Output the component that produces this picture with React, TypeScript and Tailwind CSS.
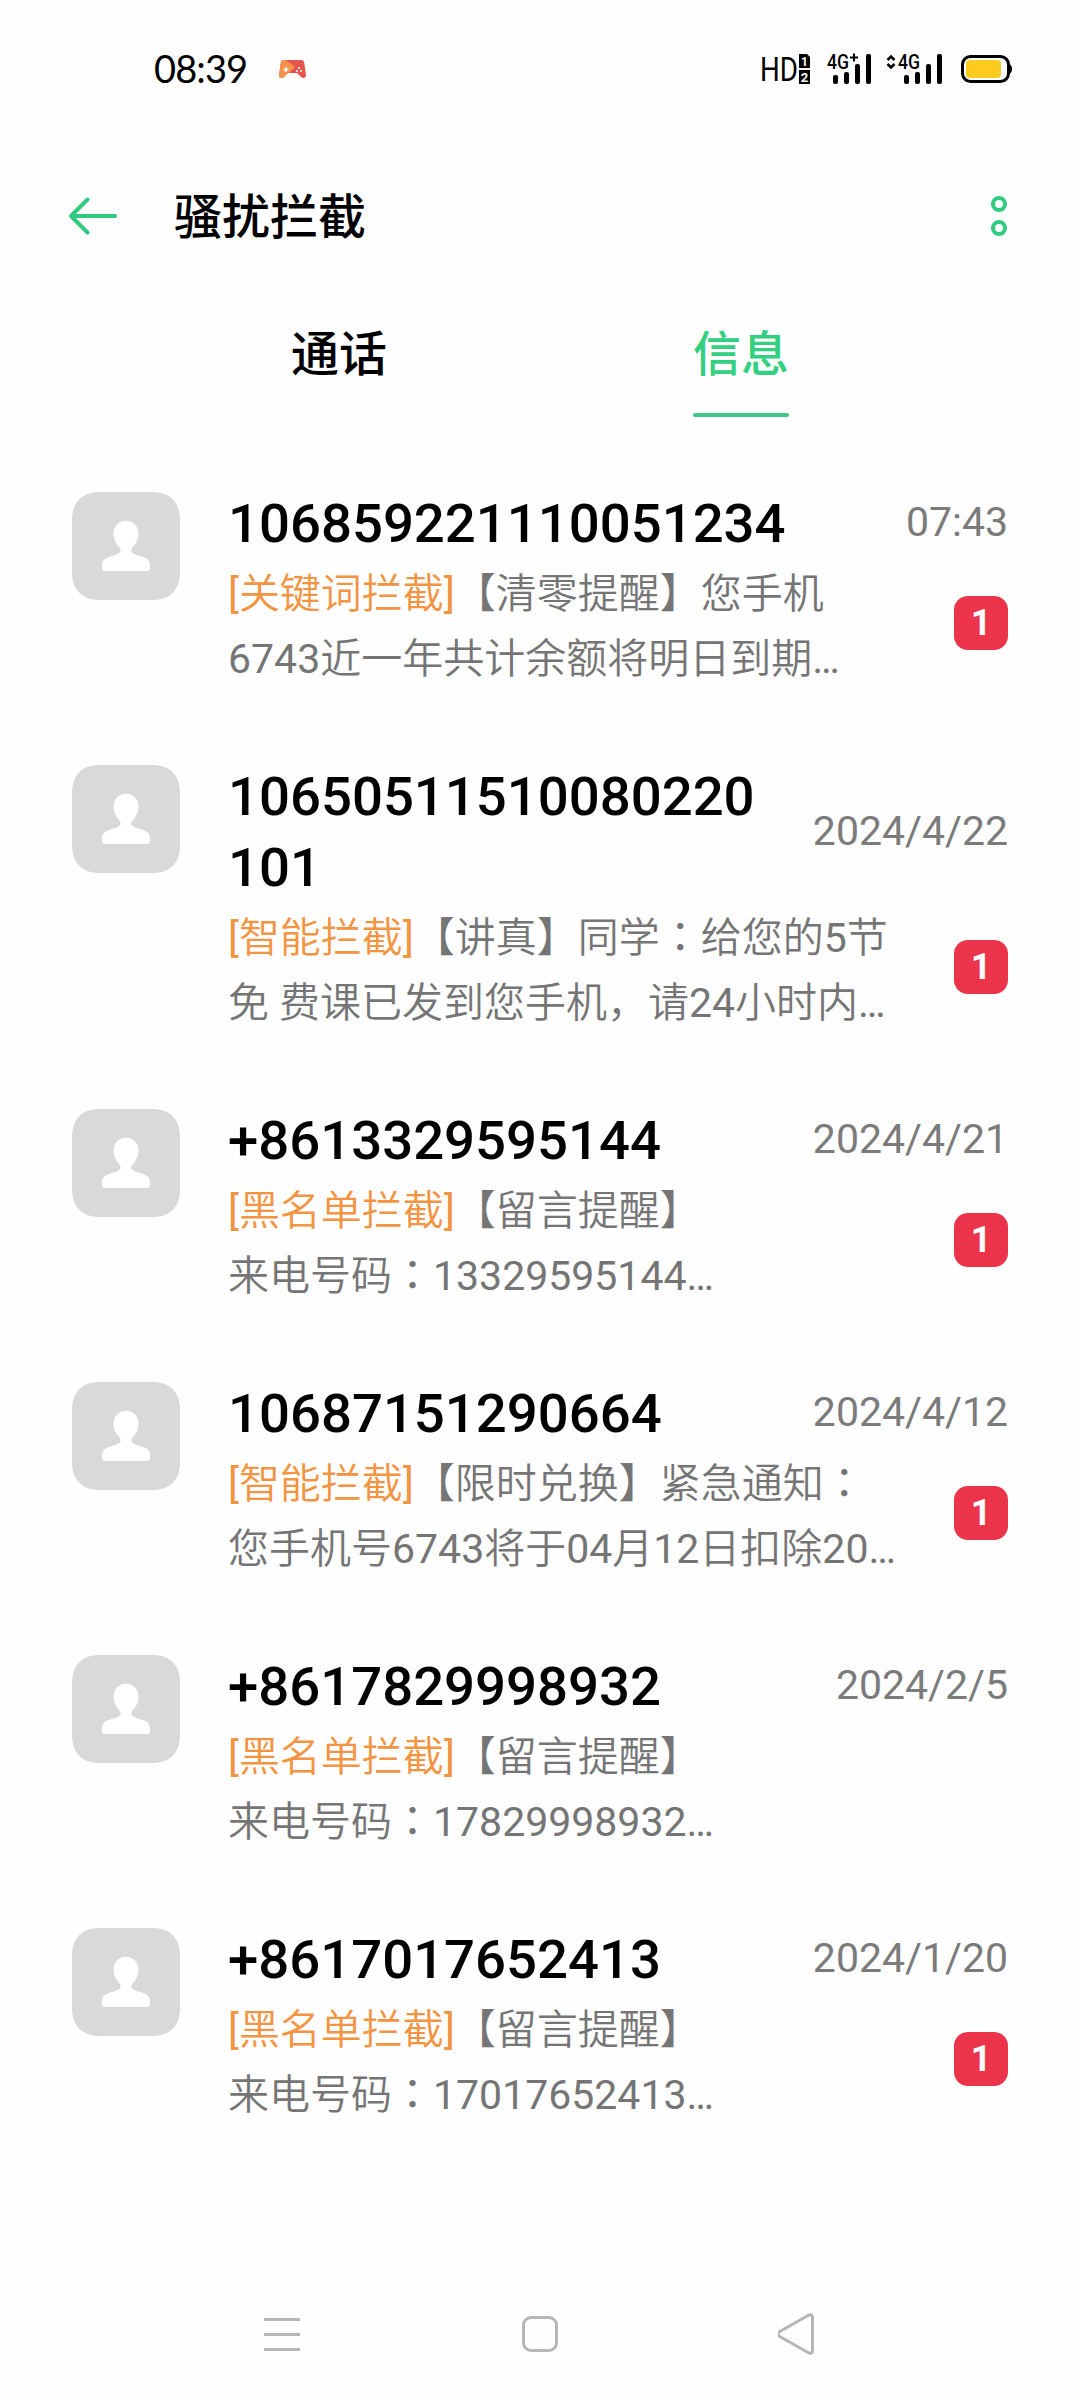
import type { ReactNode } from 'react';

// ─── Data ────────────────────────────────────────────────────────────────────

interface Message {
  number: string[];
  time:   string;
  tag:    string;
  lines:  [string, string];
  unread?: number;
}

const MESSAGES: Message[] = [
  { number: ['106859221110051234'],      time: '07:43',     tag: '关键词拦截', lines: ['【清零提醒】您手机', '6743近一年共计余额将明日到期…'],          unread: 1 },
  { number: ['10650511510080220', '101'], time: '2024/4/22', tag: '智能拦截',   lines: ['【讲真】同学：给您的5节', '免 费课已发到您手机，请24小时内…'],      unread: 1 },
  { number: ['+8613329595144'],          time: '2024/4/21', tag: '黑名单拦截', lines: ['【留言提醒】', '来电号码：13329595144…'],                     unread: 1 },
  { number: ['10687151290664'],          time: '2024/4/12', tag: '智能拦截',   lines: ['【限时兑换】紧急通知：', '您手机号6743将于04月12日扣除20…'],      unread: 1 },
  { number: ['+8617829998932'],          time: '2024/2/5',  tag: '黑名单拦截', lines: ['【留言提醒】', '来电号码：17829998932…'] },
  { number: ['+8617017652413'],          time: '2024/1/20', tag: '黑名单拦截', lines: ['【留言提醒】', '来电号码：17017652413…'],                     unread: 1 },
];

// ─── Status bar ──────────────────────────────────────────────────────────────

function Bars() {
  return (
    <g>
      <rect x="6"  y="22" width="5" height="9"  rx="2" />
      <rect x="17" y="19" width="5" height="12" rx="2" />
      <rect x="28" y="11" width="5" height="20" rx="2" />
      <rect x="39" y="1"  width="5" height="30" rx="2" />
    </g>
  );
}

function StatusBar() {
  return (
    <header className="flex h-[138px] items-start justify-between pl-[154px] pr-[68px] pt-[53px]">
      <div className="flex items-start">
        <span className="-mt-px w-[94px] font-['Lato'] text-[38px] leading-[32px] tracking-[-0.9px] text-black">08:39</span>
        <svg className="ml-[31px] mt-[7px]" width="27" height="19" viewBox="0 0 27 19">
          <path d="M5 0h17c2 0 3 1 3.300 3l1.700 12c.2 3-3 4-5 2l-4-4h-9l-4 4c-2 2-5 1-4.900-2L1.700 3C2 1 3 0 5 0z" fill="#e2564d" />
          <path d="M5 0h2l9 7-6 6H9l-4 4c-2 2-5 1-4.900-2L1.700 3C2 1 3 0 5 0z" fill="#f5924a" />
          <path d="M7 7v5M4.500 9.500h5" stroke="#fff" strokeWidth="1.500" />
          <circle cx="20" cy="8" r="1" fill="#fff" />
          <circle cx="18" cy="11" r="1" fill="#fff" />
          <circle cx="22" cy="11" r="1" fill="#fff" />
        </svg>
      </div>
      <div className="flex items-start">
        <svg className="overflow-visible" width="50" height="32" viewBox="0 0 50 32">
          <text x="-1" y="28" fontFamily="Roboto, sans-serif" fontSize="33" textLength="38" lengthAdjust="spacingAndGlyphs">HD</text>
          <path d="M38 1h8l3 3v11H38z" />
          <path d="M38 17h11v14H38z" />
          <text x="43.500" y="12.500" textAnchor="middle" fill="#fff" fontFamily="Roboto, sans-serif" fontWeight="700" fontSize="12">1</text>
          <text x="43.500" y="28.500" textAnchor="middle" fill="#fff" fontFamily="Roboto, sans-serif" fontWeight="700" fontSize="13">2</text>
        </svg>
        <svg className="ml-[16px] overflow-visible" width="45" height="32" viewBox="0 0 45 32">
          <text x="0" y="15.500" fontFamily="Roboto, sans-serif" fontWeight="500" fontSize="20" textLength="22" lengthAdjust="spacingAndGlyphs">4G</text>
          <path d="M23 4.500h8M27 .5v8" stroke="#000" strokeWidth="2" />
          <Bars />
        </svg>
        <svg className="ml-[14px] overflow-visible" width="58" height="32" viewBox="0 0 58 32">
          <path d="M1.500 7L5 3.500 8.500 7M1.500 11L5 14.500 8.500 11" fill="none" stroke="#000" strokeWidth="2.500" />
          <text x="12" y="15.500" fontFamily="Roboto, sans-serif" fontWeight="500" fontSize="20" textLength="22" lengthAdjust="spacingAndGlyphs">4G</text>
          <g transform="translate(12 0)"><Bars /></g>
        </svg>
        <svg className="ml-[17px]" width="51" height="32" viewBox="0 0 51 32">
          <rect x="1.500" y="3.500" width="46" height="25" rx="8" fill="none" stroke="#000" strokeWidth="3" />
          <rect x="5" y="7" width="35" height="18" rx="4" fill="#fccb20" />
          <path d="M48 11c2 1 3 2 3 5s-1 4-3 5z" />
        </svg>
      </div>
    </header>
  );
}

// ─── Title and tabs ──────────────────────────────────────────────────────────

function TitleBar() {
  return (
    <div className="flex h-[156px] items-center pl-[68px] pr-[71px]">
      <svg width="50" height="40" viewBox="0 0 50 40" fill="none" stroke="#32ca80" strokeWidth="4" strokeLinecap="round" strokeLinejoin="round">
        <path d="M47 20H3M19.500 3.500L3 20l16.500 16.500" />
      </svg>
      <h1 className="ml-[56px] flex-1 pt-1 text-[48px] font-medium leading-[60px]">骚扰拦截</h1>
      <svg width="20" height="44" viewBox="0 0 20 44" fill="none" stroke="#32ca80" strokeWidth="4">
        <circle cx="10" cy="10" r="6" />
        <circle cx="10" cy="34" r="6" />
      </svg>
    </div>
  );
}

function Tab({ active, children }: { active?: boolean; children: ReactNode }) {
  return (
    <div className="flex w-[402px] flex-col items-center">
      <span className={active ? 'text-[48px] font-medium leading-[60px] text-[#32d080]' : 'text-[48px] font-medium leading-[60px]'}>
        {children}
      </span>
      {active && <span className="mt-[28px] h-1 w-24 rounded-sm bg-[#40c686]" />}
    </div>
  );
}

// ─── Message list ────────────────────────────────────────────────────────────

function Avatar() {
  return (
    <svg className="mt-1 shrink-0" width="108" height="108" viewBox="0 0 108 108">
      <path d="M28 0h52C98 0 108 10 108 28v52c0 18-10 28-28 28H28C10 108 0 98 0 80V28C0 10 10 0 28 0z" fill="#d9d9d9" />
      <path
        d="M54 28.700c7.500 0 12.500 5.500 12.500 13 0 5-2 9.500-5 12.500-2.500 2.700-3 5.300-.5 7 2.500 1.600 8 2.800 12.500 4.800 3 1.400 4.500 3.500 4.500 7v3c0 2-1 3-3 3H33c-2 0-3-1-3-3v-3c0-3.500 1.500-5.600 4.500-7 4.500-2 10-3.200 12.500-4.800 2.500-1.700 2-4.300-.5-7-3-3-5-7.500-5-12.500 0-7.500 5-13 12.500-13z"
        fill="#fff"
      />
    </svg>
  );
}

// Digits keep the regular weight, Chinese is a step lighter, and the
// full-width colon sits in the middle of its cell.
function Preview({ text }: { text: string }) {
  return (
    <>
      {text.split(/([0-9…]+|：)/).map((part, i) => {
        if (part === '：') {
          return <span key={i} lang="zh-TW" className="font-['Noto_Sans_CJK_TC'] leading-none">{part}</span>;
        }
        return <span key={i} className={/^[0-9…]/.test(part) ? 'font-normal' : 'font-[350]'}>{part}</span>;
      })}
    </>
  );
}

function MessageRow({ message }: { message: Message }) {
  return (
    <li className="flex pb-[72px] pl-[72px] pr-[72px]">
      <Avatar />
      <div className="ml-12 flex-1">
        <div className="flex items-center justify-between">
          <h2 className="text-[54.500px] font-medium leading-[71px]">
            {message.number.map((part) => <div key={part}>{part}</div>)}
          </h2>
          <time className="-mt-0.5 text-[41px] leading-[69px] text-[#7b7b7b]">{message.time}</time>
        </div>
        <div className="flex h-[130px] items-start justify-between">
          <p className="whitespace-nowrap pt-[3px] text-[41px] leading-[65px] text-[#757575] [text-spacing-trim:space-all]">
            <span className="text-[#f29441]">[<span className="font-[350]">{message.tag}</span>]</span>
            <Preview text={message.lines[0]} />
            <br />
            <Preview text={message.lines[1]} />
          </p>
          {message.unread && (
            <span className="mt-[37px] flex size-[54px] shrink-0 items-center justify-center rounded-[14px] bg-[#eb3349] text-[36px] font-bold leading-none text-white">
              {message.unread}
            </span>
          )}
        </div>
      </div>
    </li>
  );
}

// ─── Navigation bar ──────────────────────────────────────────────────────────

function NavBar() {
  return (
    <nav className="mt-auto flex h-[132px] items-center justify-between px-[262px]" >
      <svg width="40" height="44" viewBox="0 0 40 44" stroke="#b6b6b6" strokeWidth="3">
        <path d="M2 7.500h36M2 22.500h36M2 37.500h36" />
      </svg>
      <svg width="40" height="44" viewBox="0 0 40 44" fill="none" stroke="#b6b6b6" strokeWidth="3">
        <rect x="3.500" y="5.500" width="33" height="33" rx="7.500" />
      </svg>
      <svg width="40" height="44" viewBox="0 0 40 44" fill="none" stroke="#b6b6b6" strokeWidth="3">
        <path d="M1.800 19.500L30.500 3.300c2.500-1.300 4 0 4 2V38.700c0 2-1.500 3.300-4 2L1.800 24.500c-2-1.300-2-3.700 0-5z" />
      </svg>
    </nav>
  );
}

export default function App() {
  return (
    <main
      lang="zh-CN"
      className="flex h-[2400px] w-[1080px] flex-col overflow-hidden bg-[#fefefe] font-['Roboto','Noto_Sans_CJK_SC',sans-serif] text-black"
    >
      <StatusBar />
      <TitleBar />
      <div className="flex h-[194px] justify-center pt-[31px]">
        <Tab>通话</Tab>
        <Tab active>信息</Tab>
      </div>
      <ul>
        {MESSAGES.map((message) => <MessageRow key={message.number[0]} message={message} />)}
      </ul>
      <NavBar />
    </main>
  );
}
